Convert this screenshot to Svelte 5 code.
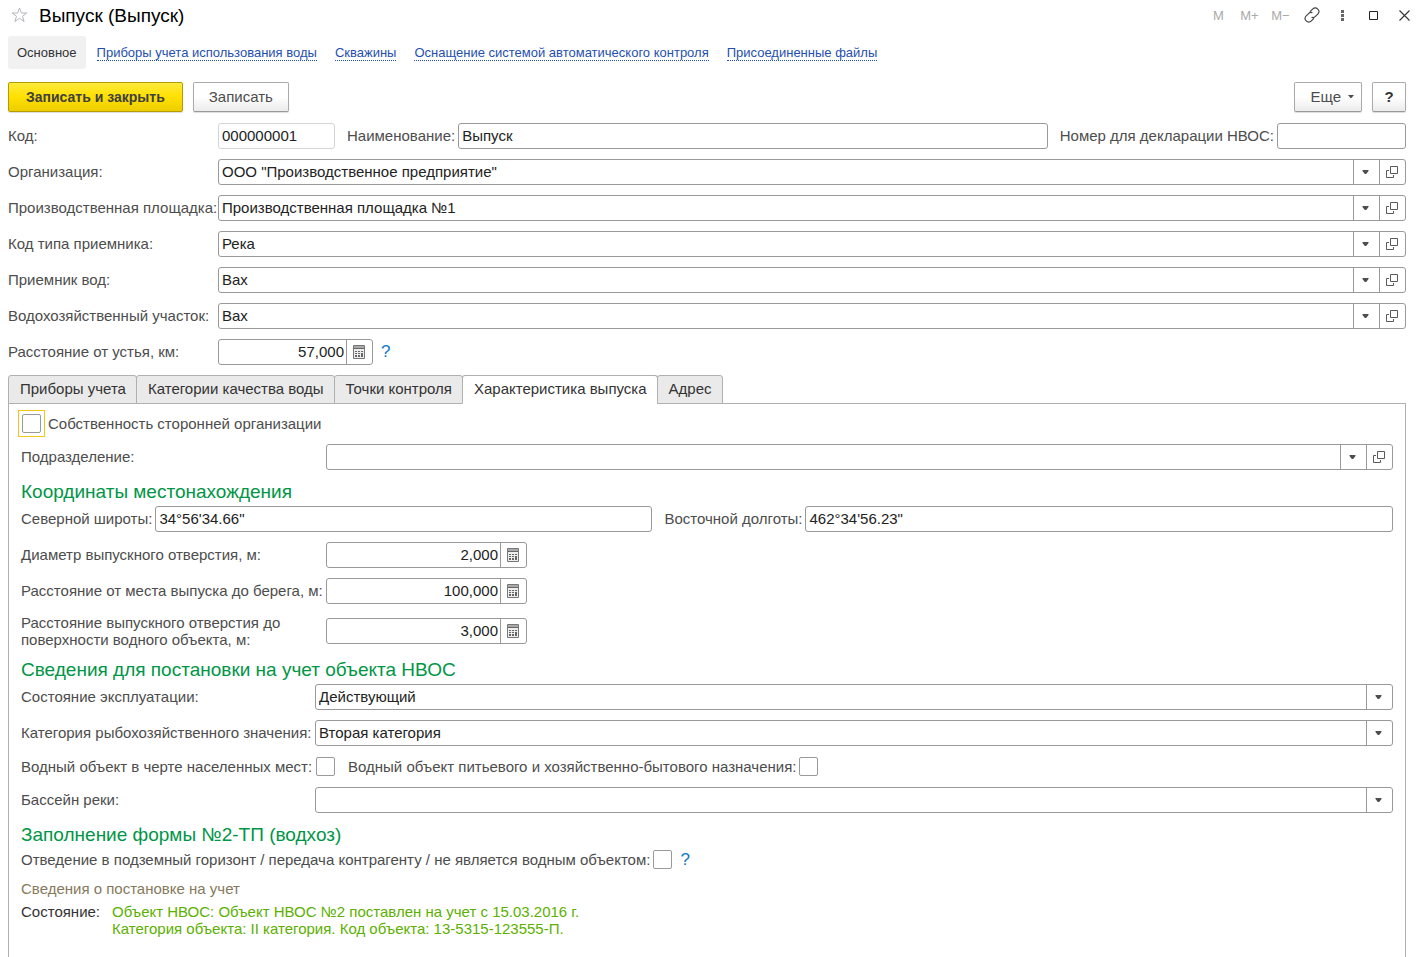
<script>
  const references = [
    { id: 'org', label: 'Организация:', value: 'ООО "Производственное предприятие"' },
    { id: 'site', label: 'Производственная площадка:', value: 'Производственная площадка №1' },
    { id: 'receiver-type', label: 'Код типа приемника:', value: 'Река' },
    { id: 'receiver', label: 'Приемник вод:', value: 'Вах' },
    { id: 'section', label: 'Водохозяйственный участок:', value: 'Вах' }
  ];
  const links = [
    'Приборы учета использования воды',
    'Скважины',
    'Оснащение системой автоматического контроля',
    'Присоединенные файлы'
  ];
  const tabs = ['Приборы учета', 'Категории качества воды', 'Точки контроля', 'Характеристика выпуска', 'Адрес'];
  const measures = [
    { id: 'diameter', label: 'Диаметр выпускного отверстия, м:', value: '2,000' },
    { id: 'shore', label: 'Расстояние от места выпуска до берега, м:', value: '100,000' },
    { id: 'depth', label: 'Расстояние выпускного отверстия до поверхности водного объекта, м:', value: '3,000', tall: true }
  ];
  let activeTab = $state(3);
</script>

{#snippet combo(id, value, withOpen)}
  <div class="field">
    <div class="pick">
      <select {id}><option>{value}</option></select>
      <span class="arrow"><svg width="7" height="4" viewBox="0 0 7 4"><path d="M.5 0h6v1L4.2 4H2.8L.5 1z" fill="#4d4d4d" /></svg></span>
    </div>
    {#if withOpen}
      <button class="addon" type="button" aria-label="Открыть">
        <svg width="12" height="12" viewBox="0 0 12 12" fill="none" stroke="#5a5a5a">
          <path d="M4.5 .5h7v7h-7zM3 4.5H.5v7h7V9" />
        </svg>
      </button>
    {/if}
  </div>
{/snippet}

{#snippet number(id, value)}
  <div class="field number">
    <input {id} type="text" {value} />
    <button class="addon" type="button" aria-label="Калькулятор">
      <svg width="12" height="14" viewBox="0 0 12 14">
        <path d="M.5 .5h11v13H.5z" fill="#eee" stroke="#777" />
        <path d="M1 1h10v2H1z" fill="#aaa" />
        <path d="M1 3.5h10" stroke="#666" />
        <path d="M2 6h2v1H2zM5 6h2v1H5zM8 6h2v1H8zM2 8h2v1H2zM5 8h2v1H5zM2 10h2v2H2zM5 10h2v2H5zM8 8h2v4H8z" fill="#666" />
      </svg>
    </button>
  </div>
{/snippet}

<div class="window">
  <header class="titlebar">
    <button class="plain star" type="button" aria-label="Избранное">
      <svg width="17" height="16" viewBox="0 0 17 16" fill="none" stroke="#b3b6bb">
        <path d="M8.5 1l1.9 5h5.4l-4.3 3.3 1.6 5.2-4.6-3.2-4.6 3.2 1.6-5.2L1.2 6h5.4z" />
      </svg>
    </button>
    <h1>Выпуск (Выпуск)</h1>
    <div class="tools">
      <button class="plain memory" type="button">M</button>
      <button class="plain memory" type="button">M+</button>
      <button class="plain memory" type="button">M−</button>
      <button class="plain" type="button" aria-label="Ссылка">
        <svg width="16" height="16" viewBox="0 0 16 16" fill="none" stroke="#444" stroke-width="1.2" stroke-linecap="round">
          <path d="M6.3 4.4l2.6-2.6a3.2 3.2 0 0 1 4.6 0l.5.5a3.2 3.2 0 0 1 0 4.6l-2.8 2.7a3.2 3.2 0 0 1-3.2.8" />
          <path d="M9.7 11.6l-2.6 2.6a3.2 3.2 0 0 1-4.6 0l-.5-.5a3.2 3.2 0 0 1 0-4.6l2.8-2.7a3.2 3.2 0 0 1 3.2-.8" />
        </svg>
      </button>
      <button class="plain" type="button" aria-label="Меню">
        <svg width="3" height="11" viewBox="0 0 3 11" fill="#666"><path d="M0 0h3v3H0zM0 4h3v3H0zM0 8h3v3H0z" /></svg>
      </button>
      <button class="plain" type="button" aria-label="Развернуть">
        <svg width="9" height="9" viewBox="0 0 9 9" fill="none" stroke="#222"><path d="M.5 .5h8v8h-8z" /></svg>
      </button>
      <button class="plain" type="button" aria-label="Закрыть">
        <svg width="11" height="11" viewBox="0 0 11 11" stroke="#333" stroke-width="1.1"><path d="M.5 .5l10 10M10.5 .5l-10 10" /></svg>
      </button>
    </div>
  </header>

  <nav>
    <a class="current" href="#main">Основное</a>
    {#each links as link, i}
      <a class="link" href="#section-{i}">{link}</a>
    {/each}
  </nav>

  <div class="commands">
    <button class="btn primary" type="button">Записать и закрыть</button>
    <button class="btn" type="button">Записать</button>
    <button class="btn more" type="button">
      Еще
      <svg width="6" height="3" viewBox="0 0 6 3"><path d="M0 0h6L3.5 3h-1z" fill="#4d4d4d" /></svg>
    </button>
    <button class="btn help" type="button">?</button>
  </div>

  <form class="head">
    <div class="row">
      <label class="wide" for="code">Код:</label>
      <div class="field code"><input id="code" type="text" value="000000001" readonly /></div>
      <label class="second" for="name">Наименование:</label>
      <div class="field"><input id="name" type="text" value="Выпуск" /></div>
      <label class="second" for="declaration">Номер для декларации НВОС:</label>
      <div class="field declaration"><input id="declaration" type="text" /></div>
    </div>
    {#each references as item}
      <div class="row">
        <label class="wide" for={item.id}>{item.label}</label>
        {@render combo(item.id, item.value, true)}
      </div>
    {/each}
    <div class="row short">
      <label class="wide" for="mouth">Расстояние от устья, км:</label>
      {@render number('mouth', '57,000')}
      <button class="plain hint" type="button">?</button>
    </div>
  </form>

  <div class="tabs" role="tablist">
    {#each tabs as tab, i}
      <button type="button" role="tab" aria-selected={i === activeTab} class:active={i === activeTab} onclick={() => (activeTab = i)}>{tab}</button>
    {/each}
  </div>

  <section class="panel">
    <div class="owner">
      <span class="focus"><input id="foreign" type="checkbox" /></span>
      <label for="foreign">Собственность сторонней организации</label>
    </div>
    <div class="group">
      <div class="row">
        <label for="department">Подразделение:</label>
        {@render combo('department', '', true)}
      </div>
    </div>

    <h2>Координаты местонахождения</h2>
    <div class="group">
      <div class="coords">
        <div class="pair">
          <label for="latitude">Северной широты:</label>
          <div class="field"><input id="latitude" type="text" value={'34°56\'34.66"'} /></div>
        </div>
        <div class="pair">
          <label for="longitude">Восточной долготы:</label>
          <div class="field"><input id="longitude" type="text" value={'462°34\'56.23"'} /></div>
        </div>
      </div>
      {#each measures as item}
        <div class="row" class:tall={item.tall}>
          <label for={item.id}>{item.label}</label>
          {@render number(item.id, item.value)}
        </div>
      {/each}
    </div>

    <h2>Сведения для постановки на учет объекта НВОС</h2>
    <div class="group register">
      <div class="row">
        <label for="state">Состояние эксплуатации:</label>
        {@render combo('state', 'Действующий', false)}
      </div>
      <div class="row">
        <label for="fishery">Категория рыбохозяйственного значения:</label>
        {@render combo('fishery', 'Вторая категория', false)}
      </div>
      <div class="checks">
        <label class="first" for="settlement">Водный объект в черте населенных мест:</label>
        <input id="settlement" type="checkbox" />
        <label class="next" for="drinking">Водный объект питьевого и хозяйственно-бытового назначения:</label>
        <input id="drinking" type="checkbox" />
      </div>
      <div class="row">
        <label for="basin">Бассейн реки:</label>
        {@render combo('basin', '', false)}
      </div>
    </div>

    <h2>Заполнение формы №2-ТП (водхоз)</h2>
    <div class="checks">
      <label class="lone" for="underground">Отведение в подземный горизонт / передача контрагенту / не является водным объектом:</label>
      <input id="underground" type="checkbox" />
      <button class="plain hint" type="button">?</button>
    </div>
    <p class="caption">Сведения о постановке на учет</p>
    <div class="status">
      <span>Состояние:</span>
      <p>Объект НВОС: Объект НВОС №2 поставлен на учет с 15.03.2016 г.<br />Категория объекта: II категория. Код объекта: 13-5315-123555-П.</p>
    </div>
  </section>
</div>

<style>
  :global(body) {
    margin: 0;
    background: #fff;
  }
  .window {
    box-sizing: border-box;
    min-height: 100vh;
    display: flex;
    flex-direction: column;
    padding: 0 15px 0 8px;
    font: 15px/17px "Liberation Sans", Arial, sans-serif;
    color: #4d4d4d;
  }
  button, input, select {
    font: inherit;
    color: inherit;
    margin: 0;
  }
  svg {
    display: block;
    flex: none;
  }
  h1, h2, p {
    margin: 0;
    font-weight: normal;
  }
  .plain {
    border: 0;
    padding: 0;
    background: none;
    display: flex;
    align-items: center;
    justify-content: center;
  }
  .titlebar {
    display: flex;
    align-items: center;
    height: 30px;
    margin-right: -14px;
    padding-left: 3px;
  }
  h1 {
    margin-left: 11px;
    padding-top: 2px;
    font-size: 19px;
    line-height: 24px;
    color: #000;
  }
  .tools {
    display: flex;
    align-items: center;
    margin-left: auto;
  }
  .tools .plain {
    width: 31px;
    height: 24px;
  }
  .tools .memory {
    font-size: 13px;
    color: #aaa;
  }
  nav {
    display: flex;
    align-items: center;
    gap: 18px;
    margin-top: 6px;
    font-size: 13px;
    line-height: 15px;
  }
  .current {
    padding: 9px;
    margin-right: -7px;
    border-radius: 3px;
    background: #f1f1f1;
    color: #333;
    text-decoration: none;
  }
  .link {
    margin-top: 1px;
    color: #1f4fb0;
    text-decoration: none;
    border-bottom: 1px dotted #1f4fb0;
    line-height: 14px;
  }
  .commands {
    display: flex;
    gap: 10px;
    margin: 13px 0 11px;
  }
  .btn {
    display: flex;
    align-items: center;
    justify-content: center;
    box-sizing: border-box;
    height: 30px;
    padding: 0 15px 1px;
    border: 1px solid #aaa;
    border-bottom-color: #999;
    border-radius: 2px;
    background: linear-gradient(#fff 50%, #ebebeb);
    box-shadow: 0 1px 1px #ddd;
  }
  .primary {
    padding: 0 17px;
    border-color: #b39b00;
    background: linear-gradient(#ffea3d, #ffe000 50%, #edcd00);
    font-size: 14px;
    font-weight: bold;
    color: #404040;
  }
  .more {
    margin-left: auto;
    gap: 7px;
    padding-right: 7px;
  }
  .help {
    width: 34px;
    padding: 0 0 1px;
    font-weight: bold;
    color: #333;
  }
  .head, .group {
    display: flex;
    flex-direction: column;
    gap: 10px;
  }
  .row {
    display: flex;
    align-items: center;
  }
  .row label, .pair label, .owner label {
    flex: none;
    padding-bottom: 1px;
    white-space: nowrap;
  }
  .row .wide {
    width: 210px;
  }
  .row .second {
    margin: 0 3px 0 12px;
  }
  .field {
    flex: 1;
    min-width: 0;
    box-sizing: border-box;
    display: flex;
    height: 26px;
    border: 1px solid #999;
    border-radius: 3px;
    background: #fff;
    color: #222;
  }
  .field input, .field select {
    flex: 1;
    width: 100%;
    min-width: 0;
    box-sizing: border-box;
    height: 24px;
    padding: 0 3px 1px;
    border: 0;
    border-radius: 3px;
    background: transparent;
    appearance: none;
    outline: none;
  }
  .field.code {
    flex: 0 0 117px;
    border-color: #d4d4d4;
  }
  .field.declaration {
    flex: 0 0 129px;
  }
  .field.number {
    flex: 0 0 201px;
  }
  .short .number {
    flex-basis: 155px;
  }
  .field.number input {
    padding: 0 2px 1px;
    text-align: right;
  }
  .pick {
    flex: 1;
    display: flex;
    min-width: 0;
    position: relative;
  }
  .arrow {
    position: absolute;
    inset: 0 0 0 auto;
    box-sizing: border-box;
    width: 26px;
    padding-right: 2px;
    border-left: 1px solid #999;
    display: flex;
    align-items: center;
    justify-content: center;
    pointer-events: none;
  }
  .addon {
    flex: none;
    box-sizing: border-box;
    width: 26px;
    padding: 0 2px 0 0;
    border: 0;
    border-left: 1px solid #999;
    background: none;
    display: flex;
    align-items: center;
    justify-content: center;
  }
  .hint {
    margin-left: 8px;
    padding-bottom: 1px;
    color: #0e79c4;
    font-size: 17px;
  }
  .tabs {
    display: flex;
    margin-top: 10px;
    position: relative;
  }
  .tabs button {
    box-sizing: border-box;
    height: 29px;
    margin: 0 -1px -1px 0;
    padding: 0 10px 2px 11px;
    border: 1px solid #b0b0b0;
    border-radius: 3px 3px 0 0;
    background: #eaeaea;
    color: #333;
    white-space: nowrap;
  }
  .tabs .active {
    background: #fff;
    border-bottom-color: #fff;
  }
  .panel {
    flex: 1;
    padding: 0 12px 18px;
    border: 1px solid #b0b0b0;
    border-bottom: 0;
  }
  .owner {
    display: flex;
    align-items: center;
    height: 40px;
    gap: 3px;
    margin-left: -3px;
  }
  .focus {
    margin-bottom: 1px;
    padding: 3px;
    border: 1px solid #f5c518;
  }
  input[type='checkbox'] {
    display: block;
    flex: none;
    box-sizing: border-box;
    width: 19px;
    height: 19px;
    margin: 0;
    border: 1px solid #999;
    border-radius: 2px;
    background: #fff;
    appearance: none;
  }
  .group .row label {
    width: 305px;
  }
  .group .tall label {
    padding: 0;
    white-space: normal;
  }
  .register .row label {
    width: 294px;
  }
  h2 {
    padding-top: 8px;
    font-size: 19px;
    line-height: 28px;
    color: #009646;
  }
  .coords {
    display: grid;
    grid-template-columns: 13fr 15fr;
    gap: 12px;
  }
  .pair {
    display: flex;
    align-items: center;
    gap: 3px;
  }
  .checks {
    display: flex;
    align-items: center;
    height: 21px;
  }
  .checks .first {
    width: 295px;
  }
  .checks .next {
    margin: 0 3px 0 13px;
  }
  .checks .lone {
    margin-right: 3px;
  }
  .caption {
    margin-top: 10px;
    color: #857a5c;
  }
  .status {
    display: flex;
    gap: 12px;
    margin-top: 6px;
    color: #333;
  }
  .status p {
    color: #5cb000;
  }
</style>
